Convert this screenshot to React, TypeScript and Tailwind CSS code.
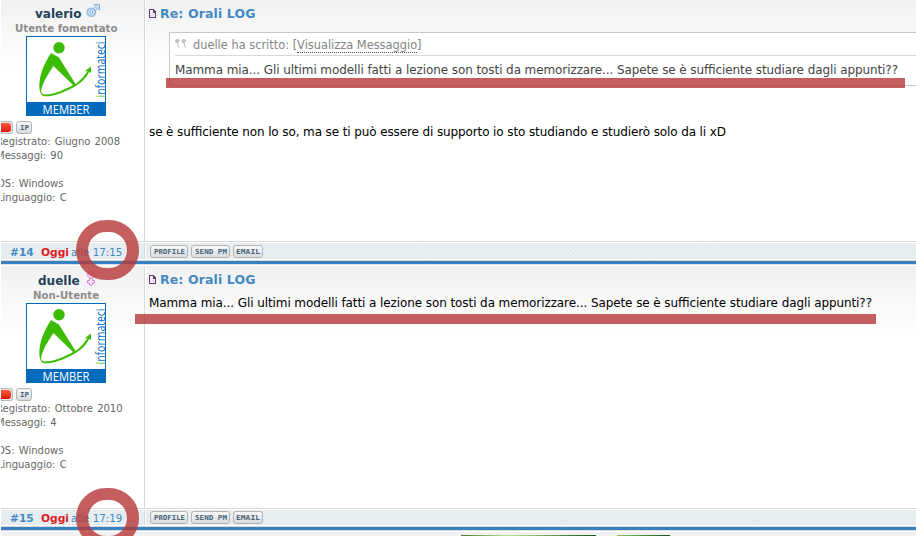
import React from "react";

const line = "Mamma mia... Gli ultimi modelli fatti a lezione son tosti da memorizzare... Sapete se è sufficiente studiare dagli appunti??";

function Male() {
  return (
    <svg width="15" height="15" viewBox="0 0 15 15" fill="none">
      <circle cx="5.3" cy="9.3" r="4" fill="#d5e5f6" stroke="#9dbbe0" strokeWidth="1.8" />
      <circle cx="5.3" cy="9.3" r="1.5" fill="#fff" stroke="#7b9fd0" />
      <path d="M8 1.5H13.5V7L11.8 5.4L9.5 7.5L7.5 5.5L9.7 3.3Z" fill="#c9ddf3" stroke="#8db2d9" />
    </svg>
  );
}

function Female() {
  return (
    <svg width="10" height="16" viewBox="0 0 10 16" fill="none">
      <circle cx="5" cy="4.5" r="3.4" fill="#f7dff5" stroke="#eeb6e8" strokeWidth="1.8" />
      <circle cx="5" cy="4.5" r="1" fill="#fff" stroke="#df80d4" strokeWidth=".8" />
      <path d="M3.5 8.5h3v2h2v2.5h-2v2h-3v-2h-2V10.500h2z" fill="#fbe5fa" stroke="#df80d4" />
    </svg>
  );
}

function Avatar() {
  return (
    <svg width="80" height="80" viewBox="0 0 80 80" className="block">
      <path d="M0 0H80V80H0Z" fill="#006abc" />
      <path d="M1 1H79V66H1Z" fill="#fff" />
      <circle cx="33" cy="11.8" r="5.7" fill="#3bbc00" />
      <path
        d="M25 17L33 21.5L49.500 48C56 43 60 38 61.500 35L58.500 35.500L65 30.500V37L63.200 36C60 42 56 46 50.500 49.500C40 56 27 61 18 60.300C11 58 13 42 17 32C20 25 23 20 25 17ZM27.500 30C20 41 13 54 16 57.500C20 61 38 54.500 47 49Z"
        fill="#3bbc00"
        fillRule="evenodd"
      />
      <text transform="translate(79 61.5) rotate(-90)" fontSize="11.7" textLength="56" lengthAdjust="spacingAndGlyphs" fontFamily="'Open Sans',sans-serif" fill="#006abc">
        <tspan fill="#3bbc00">i</tspan>nformateci
      </text>
      <text x="40" y="78" textAnchor="middle" fontSize="12.8" textLength="47" lengthAdjust="spacingAndGlyphs" fontFamily="'Open Sans',sans-serif" fill="#fff">MEMBER</text>
    </svg>
  );
}

function PageIcon() {
  return (
    <svg width="8" height="9" viewBox="0 0 8 9" shapeRendering="crispEdges">
      <path d="M.5.5H4.5L6.5 3V8.5H.5Z" fill="#f4edf8" stroke="#5b3d70" />
      <path d="M4 1V3.500H7" fill="none" stroke="#5b3d70" />
      <path d="M2 6h1v1h-1zM3 5h1v1h-1zM4 6h1v1h-1z" fill="#d5c5df" />
    </svg>
  );
}

function QuoteIcon() {
  return (
    <svg width="12" height="10" viewBox="0 0 12 10" fill="#c2c2c2">
      <path d="M0 2.2C0 .8 1 0 2.400 0C4 0 4.700 1 4.700 2L3.300 3.400C3.300 6 3.600 7.600 4.800 9.600C2.700 8.400 2 6.200 2.200 4.200C.9 4.200 0 3.400 0 2.200Z" />
      <path d="M6.500 2.200C6.500 .8 7.500 0 8.900 0C10.500 0 11.200 1 11.200 2L9.800 3.400C9.800 6 10.100 7.600 11.300 9.600C9.200 8.400 8.500 6.200 8.700 4.200C7.400 4.200 6.500 3.400 6.500 2.200Z" />
    </svg>
  );
}

function Button({ label, box, width }: { label: string; box: string; width: number }) {
  return (
    <span className={`${box} flex h-[13px] shrink-0 justify-center rounded-[3px] border border-[#b4b4b4] bg-linear-to-b from-[#f8f8f8] to-[#d8dcdf]`}>
      <svg width={width} height="11" className="block shrink-0 overflow-visible">
        <text x="0" y="8" fontSize="7" fontWeight="700" textLength={width} lengthAdjust="spacingAndGlyphs" fontFamily="'DejaVu Sans Mono',monospace" fill="#4a6478">{label}</text>
      </svg>
    </span>
  );
}

function Stats({ joined, posts }: { joined: string; posts: string }) {
  return (
    <>
      <div className="mt-[5px] flex h-[14px] gap-[3px]">
        <span className="flex h-[13px] w-[12px] items-center rounded-r-[3px] border border-l-0 border-[#b8b8b8] bg-[#e8e8e8]">
          <span className="h-[9px] w-[10px] rounded-[3px] rounded-l-none bg-linear-to-b from-[#ff5a3c] to-[#dc0800]" />
        </span>
        <Button label="IP" box="w-[16px]" width={9} />
      </div>
      <div className="ml-[-4px] text-[10px] leading-[14px] [word-spacing:1px] whitespace-pre text-[#666]">
        <div className="ml-[-1px]">Registrato: {joined}</div>
        <div className="ml-[-1px]">Messaggi: {posts}</div>
        <div className="h-[14px]" />
        <div>OS: Windows</div>
        <div>Linguaggio: C</div>
      </div>
    </>
  );
}

function Footer({ id, time, height }: { id: string; time: string; height: string }) {
  return (
    <div className={`${height} flex shrink-0 border-y border-[#d8d8d8] bg-white py-px`}>
      <div className="flex min-w-0 flex-1 items-center bg-[repeating-linear-gradient(135deg,#e2eaee_0px,#e2eaee_1px,#ebf1f4_2px,#e8eff2_3px)]">
        <div className="flex w-[143px] shrink-0 items-baseline pt-[2px] pl-[9px] text-[10.3px] leading-[14px] whitespace-pre text-[#4389c2]">
          <b className="w-[31px] text-[10.67px]">{id}</b>
          <b className="w-[30px] text-[10.67px] text-[#dc1d23]">Oggi</b>
          <span>alle {time}</span>
        </div>
        <div className="h-full w-[2px] shrink-0 border-l border-[#d8d8d8] bg-white" />
        <div className="ml-[4px] flex gap-[3px]">
          <Button label="PROFILE" box="w-[38px]" width={31} />
          <Button label="SEND PM" box="w-[39px]" width={32} />
          <Button label="EMAIL" box="w-[30px]" width={24} />
        </div>
      </div>
    </div>
  );
}

function Title() {
  return (
    <div className="flex h-[16px] items-center">
      <PageIcon />
      <svg width="100" height="16" className="ml-[3px]">
        <text x="0" y="12.5" fontSize="12.5" fontWeight="700" textLength="95.5" fill="#4389c2">Re: Orali LOG</text>
      </svg>
    </div>
  );
}

function BodyText({ children, width, fill }: { children: string; width: number; fill: string }) {
  return (
    <svg width={width + 4} height="18" className="block shrink-0">
      <text x="0" y="13" fontSize="12" fontFamily="'DejaVu Sans',sans-serif" textLength={width} fill={fill}>{children}</text>
    </svg>
  );
}

export default function App() {
  return (
    <div className="relative h-[536px] w-[916px] overflow-hidden bg-white pl-px font-['DejaVu_Sans',sans-serif]">
      <div className="flex h-[241px] bg-linear-to-b from-[#f1f1f1] to-white to-[70px]">
        <div className="w-[144px] shrink-0 overflow-hidden border-r border-[#d8d8d8]">
          <div className="flex h-[21px] items-start pt-[3px] pl-[34px] text-[12px] leading-[23px] font-bold text-[#224158]">
            <span className="w-[51px]">valerio</span><Male />
          </div>
          <div className="pl-[14px] text-[10.2px] leading-[15px] font-bold text-[#8c8c8c]">Utente fomentato</div>
          <div className="pl-[25px]"><Avatar /></div>
          <Stats joined="Giugno 2008" posts="90" />
        </div>
        <div className="min-w-0 flex-1 border-l border-white pt-[5px] pl-[3px]">
          <Title />
          <div className="mt-[11px] ml-[20px] h-[54px] border border-r-0 border-[#c8c8c8] bg-white pl-[5px]">
            <div className="flex h-[23px] items-center border-b border-[#d8d8d8]">
              <QuoteIcon />
              <div className="ml-[6px] pt-[2px] text-[11.4px] leading-[13px] whitespace-pre text-[#858585]">duelle ha scritto: [<span className="border-b border-dotted border-[#555]">Visualizza Messaggio</span>]</div>
            </div>
            <div className="pt-[5px]"><BodyText width={723} fill="#444">{line}</BodyText></div>
          </div>
          <div className="mt-[37px]"><BodyText width={577} fill="#000">se è sufficiente non lo so, ma se ti può essere di supporto io sto studiando e studierò solo da li xD</BodyText></div>
        </div>
      </div>
      <Footer id="#14" time="17:15" height="h-[20px]" />
      <div className="h-[3px] bg-[#3581c1]" />
      <div className="h-[2px] border-b border-white bg-[#ddd]" />
      <div className="flex h-[242px] bg-linear-to-b from-[#f1f1f1] to-white to-[70px]">
        <div className="w-[144px] shrink-0 overflow-hidden border-r border-[#d8d8d8]">
          <div className="flex h-[22px] items-start pt-[4px] pl-[37px] text-[12px] leading-[23px] font-bold text-[#224158]">
            <span className="w-[48px]">duelle</span><Female />
          </div>
          <div className="pl-[32px] text-[10.2px] leading-[15px] font-bold text-[#8c8c8c]">Non-Utente</div>
          <div className="pl-[25px]"><Avatar /></div>
          <Stats joined="Ottobre 2010" posts="4" />
        </div>
        <div className="min-w-0 flex-1 border-l border-white pt-[5px] pl-[3px]">
          <Title />
          <div className="mt-[7px]"><BodyText width={723} fill="#000">{line}</BodyText></div>
        </div>
      </div>
      <Footer id="#15" time="17:19" height="h-[19px]" />
      <div className="h-[3px] bg-[#3581c1]" />
      <div className="h-[2px] border-b border-white bg-[#ddd]" />
      <div className="flex h-[4px] items-end bg-[#f1f1f1]">
        <div className="ml-[460px] h-px w-[135px] bg-linear-to-r from-[#477a2c] via-[#b9ed94] via-35% to-[#145211]" />
        <div className="ml-[21px] h-px w-[53px] bg-linear-to-r from-[#8acb65] to-[#145211]" />
      </div>
      <div className="absolute top-[78px] left-[166px] h-[10px] w-[739px] bg-[#b73737]/80" />
      <div className="absolute top-[314px] left-[135px] h-[10px] w-[741px] bg-[#b73737]/80" />
      <div className="absolute top-[220px] left-[76px] h-[60px] w-[63px] rounded-full border-[12px] border-[#b73737]/80" />
      <div className="absolute top-[488px] left-[76px] h-[60px] w-[63px] rounded-full border-[12px] border-[#b73737]/80" />
    </div>
  );
}
